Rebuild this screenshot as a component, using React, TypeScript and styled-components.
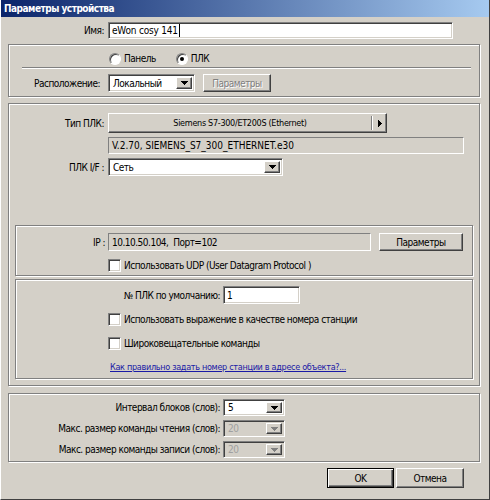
import React from "react";
import styled, { createGlobalStyle, css } from "styled-components";

const GlobalStyle = createGlobalStyle`
  body {
    margin: 0;
    background: #d4d0c8;
  }
  * {
    box-sizing: border-box;
  }
`;

const face = "#d4d0c8";
const shadow = "#808080";
const dark = "#404040";
const uiFont = `Tahoma, "DejaVu Sans Condensed", "DejaVu Sans", sans-serif`;

const sunken = css`
  border: 1px solid;
  border-color: ${shadow} #fff #fff ${shadow};
  box-shadow: inset 1px 1px 0 ${dark}, inset -1px -1px 0 ${face};
`;

const raised = css`
  border: 1px solid;
  border-color: #fff ${dark} ${dark} #fff;
  box-shadow: inset -1px -1px 0 ${shadow};
  background: ${face};
`;

const Window = styled.div`
  width: 490px;
  height: 500px;
  background: ${face};
  border-left: 1px solid #fff;
  border-right: 1px solid ${dark};
  border-bottom: 1px solid ${dark};
  font-family: ${uiFont};
  font-size: 10px;
  letter-spacing: -0.5px;
  color: #000;
  display: flex;
  flex-direction: column;
`;

const TitleBar = styled.div`
  height: 17px;
  flex: none;
  padding-left: 3px;
  display: flex;
  align-items: center;
  background: linear-gradient(90deg, #0a246a, #a6caf0);
  color: #fff;
  font-weight: bold;
`;

const Content = styled.div`
  padding: 0 9px 0 7px;
  display: flex;
  flex-direction: column;
`;

const Group = styled.div<{ $mt: number; $pad: string }>`
  margin-top: ${(p) => p.$mt}px;
  padding: ${(p) => p.$pad};
  border: 1px solid ${shadow};
  box-shadow: inset 1px 1px 0 #fff, 1px 1px 0 #fff;
  display: flex;
  flex-direction: column;
`;

const FieldRow = styled.div<{ $label: number; $gap: number; $mt?: number }>`
  display: grid;
  grid-template-columns: ${(p) => p.$label}px auto;
  column-gap: ${(p) => p.$gap}px;
  align-items: center;
  margin-top: ${(p) => p.$mt ?? 0}px;
`;

const Label = styled.span`
  text-align: right;
  white-space: nowrap;
`;

const Cells = styled.div`
  display: flex;
  align-items: center;
`;

const TextBox = styled.div<{ $w: number; $h: number }>`
  ${sunken};
  width: ${(p) => p.$w}px;
  height: ${(p) => p.$h}px;
  background: #fff;
  padding-left: 3px;
  display: flex;
  align-items: center;
  white-space: nowrap;
  letter-spacing: -0.2px;
`;

const Caret = styled.span`
  width: 1px;
  height: 13px;
  background: #000;
  margin-left: 1px;
`;

const ReadOnly = styled.div<{ $w: number; $h: number; $spacing?: number }>`
  width: ${(p) => p.$w}px;
  height: ${(p) => p.$h}px;
  border: 1px solid;
  border-color: ${shadow} #fff #fff ${shadow};
  padding-left: 3px;
  display: flex;
  align-items: center;
  white-space: nowrap;
  letter-spacing: ${(p) => p.$spacing ?? -0.5}px;
`;

const Combo = styled.div<{ $w: number; $h: number; $disabled?: boolean }>`
  ${sunken};
  width: ${(p) => p.$w}px;
  height: ${(p) => p.$h}px;
  background: ${(p) => (p.$disabled ? face : "#fff")};
  color: ${(p) => (p.$disabled ? "#a0a0a0" : "#000")};
  padding: 2px 2px 2px 4px;
  display: flex;
  align-items: center;
`;

const ComboText = styled.span`
  flex: 1;
  white-space: nowrap;
`;

const ArrowBox = styled.span`
  ${raised};
  width: 16px;
  height: 100%;
  display: flex;
  align-items: center;
  justify-content: center;
`;

const Button = styled.div<{ $w: number; $h: number; $disabled?: boolean; $default?: boolean; $ml?: number }>`
  ${raised};
  width: ${(p) => p.$w}px;
  height: ${(p) => p.$h}px;
  margin-left: ${(p) => p.$ml ?? 0}px;
  display: flex;
  align-items: center;
  justify-content: center;
  white-space: nowrap;
  ${(p) =>
    p.$disabled &&
    css`
      color: ${shadow};
      text-shadow: 1px 1px 0 #fff;
    `}
  ${(p) =>
    p.$default &&
    css`
      border: 1px solid #000;
      box-shadow: inset 1px 1px 0 #fff, inset -1px -1px 0 ${dark},
        inset -2px -2px 0 ${shadow};
    `}
`;

const PlcButton = styled.div`
  ${raised};
  width: 279px;
  height: 20px;
  display: flex;
  align-items: center;
  font-size: 9px;
  letter-spacing: -0.3px;
`;

const PlcText = styled.span`
  flex: 1;
  text-align: center;
`;

const PlcSplit = styled.span`
  width: 2px;
  height: 14px;
  border-left: 1px solid ${shadow};
  border-right: 1px solid #fff;
`;

const PlcArrow = styled.span`
  width: 13px;
  display: flex;
  justify-content: center;
`;

const RadioRow = styled.div`
  height: 13px;
  padding-left: 100px;
  display: flex;
  align-items: center;
`;

const RadioItem = styled.label<{ $ml?: number }>`
  display: flex;
  align-items: center;
  gap: 3px;
  margin-left: ${(p) => p.$ml ?? 0}px;
`;

const RadioDot = styled.span<{ $checked?: boolean }>`
  width: 12px;
  height: 12px;
  border-radius: 50%;
  border: 1px solid;
  border-color: ${shadow} #fff #fff ${shadow};
  box-shadow: inset 1px 1px 0 ${dark};
  background: #fff;
  display: flex;
  align-items: center;
  justify-content: center;
  &::after {
    content: "";
    width: 4px;
    height: 4px;
    border-radius: 50%;
    background: ${(p) => (p.$checked ? "#000" : "transparent")};
  }
`;

const Separator = styled.div`
  height: 2px;
  margin: 2px 8px 0 13px;
  border-top: 1px solid ${shadow};
  border-bottom: 1px solid #fff;
`;

const CheckRow = styled.label<{ $mt: number; $ml: number }>`
  display: flex;
  align-items: center;
  gap: 3px;
  height: 13px;
  margin-top: ${(p) => p.$mt}px;
  margin-left: ${(p) => p.$ml}px;
  white-space: nowrap;
`;

const CheckBox = styled.span`
  ${sunken};
  width: 13px;
  height: 13px;
  background: #fff;
  flex: none;
`;

const LinkRow = styled.div`
  height: 12px;
  margin: 11px 0 0 94px;
  display: flex;
  align-items: center;
`;

const HelpLink = styled.a`
  font-size: 9px;
  letter-spacing: -0.3px;
  color: #1a1aa6;
  text-decoration: underline;
  white-space: nowrap;
`;

const Footer = styled.div`
  margin-top: 6px;
  padding-right: 16px;
  display: flex;
  justify-content: flex-end;
  gap: 2px;
`;

const Arrow = ({ color = "#000", dir = "down" }: { color?: string; dir?: "down" | "right" }) =>
  dir === "down" ? (
    <svg width="7" height="4" viewBox="0 0 7 4" shapeRendering="crispEdges">
      <path d="M0 0h7v1H0zM1 1h5v1H1zM2 2h3v1H2zM3 3h1v1H3z" fill={color} />
    </svg>
  ) : (
    <svg width="4" height="7" viewBox="0 0 4 7" shapeRendering="crispEdges">
      <path d="M0 0h1v7H0zM1 1h1v5H1zM2 2h1v3H2zM3 3h1v1H3z" fill={color} />
    </svg>
  );

const Select = ({
  w,
  h,
  value,
  disabled,
}: {
  w: number;
  h: number;
  value: string;
  disabled?: boolean;
}) => (
  <Combo $w={w} $h={h} $disabled={disabled}>
    <ComboText>{value}</ComboText>
    <ArrowBox>
      <Arrow color={disabled ? shadow : "#000"} />
    </ArrowBox>
  </Combo>
);

export default function App() {
  return (
    <>
      <GlobalStyle />
      <Window>
        <TitleBar>Параметры устройства</TitleBar>
        <Content>
          <FieldRow $label={96} $gap={4} $mt={5}>
            <Label>Имя:</Label>
            <TextBox $w={345} $h={17}>
              eWon cosy 141
              <Caret />
            </TextBox>
          </FieldRow>

          <Group $mt={5} $pad="7px 0 4px">
            <RadioRow>
              <RadioItem>
                <RadioDot />
                Панель
              </RadioItem>
              <RadioItem $ml={20}>
                <RadioDot $checked />
                ПЛК
              </RadioItem>
            </RadioRow>
            <Separator />
            <FieldRow $label={91} $gap={8} $mt={5}>
              <Label>Расположение:</Label>
              <Cells>
                <Select w={87} h={18} value="Локальный" />
                <Button $w={68} $h={18} $ml={8} $disabled>
                  Параметры
                </Button>
              </Cells>
            </FieldRow>
          </Group>

          <Group $mt={6} $pad="9px 6px 6px">
            <FieldRow $label={89} $gap={4}>
              <Label>Тип ПЛК:</Label>
              <PlcButton>
                <PlcText>Siemens S7-300/ET200S (Ethernet)</PlcText>
                <PlcSplit />
                <PlcArrow>
                  <Arrow dir="right" />
                </PlcArrow>
              </PlcButton>
            </FieldRow>
            <FieldRow $label={89} $gap={4} $mt={4}>
              <span />
              <ReadOnly $w={356} $h={17} $spacing={0}>
                V.2.70, SIEMENS_S7_300_ETHERNET.e30
              </ReadOnly>
            </FieldRow>
            <FieldRow $label={89} $gap={4} $mt={4}>
              <Label>ПЛК I/F :</Label>
              <Select w={175} h={18} value="Сеть" />
            </FieldRow>

            <Group $mt={49} $pad="7px 0 3px">
              <FieldRow $label={89} $gap={3}>
                <Label>IP :</Label>
                <Cells>
                  <ReadOnly $w={263} $h={18}>
                    10.10.50.104,&nbsp; Порт=102
                  </ReadOnly>
                  <Button $w={84} $h={18} $ml={8}>
                    Параметры
                  </Button>
                </Cells>
              </FieldRow>
              <CheckRow $mt={8} $ml={92}>
                <CheckBox />
                Использовать UDP (User Datagram Protocol )
              </CheckRow>
            </Group>

            <Group $mt={3} $pad="6px 0 5px">
              <FieldRow $label={204} $gap={3}>
                <Label>№ ПЛК по умолчанию:</Label>
                <TextBox $w={77} $h={18}>
                  1
                </TextBox>
              </FieldRow>
              <CheckRow $mt={9} $ml={92}>
                <CheckBox />
                Использовать выражение в качестве номера станции
              </CheckRow>
              <CheckRow $mt={11} $ml={92}>
                <CheckBox />
                Широковещательные команды
              </CheckRow>
              <LinkRow>
                <HelpLink href="#">Как правильно задать номер станции в адресе объекта?...</HelpLink>
              </LinkRow>
            </Group>
          </Group>

          <Group $mt={7} $pad="5px 0 3px">
            <FieldRow $label={211} $gap={3}>
              <Label>Интервал блоков (слов):</Label>
              <Select w={62} h={17} value="5" />
            </FieldRow>
            <FieldRow $label={211} $gap={3} $mt={4}>
              <Label>Макс. размер команды чтения (слов):</Label>
              <Select w={62} h={17} value="20" disabled />
            </FieldRow>
            <FieldRow $label={211} $gap={3} $mt={4}>
              <Label>Макс. размер команды записи (слов):</Label>
              <Select w={62} h={17} value="20" disabled />
            </FieldRow>
          </Group>

          <Footer>
            <Button $w={67} $h={20} $default>
              OK
            </Button>
            <Button $w={68} $h={20}>
              Отмена
            </Button>
          </Footer>
        </Content>
      </Window>
    </>
  );
}
